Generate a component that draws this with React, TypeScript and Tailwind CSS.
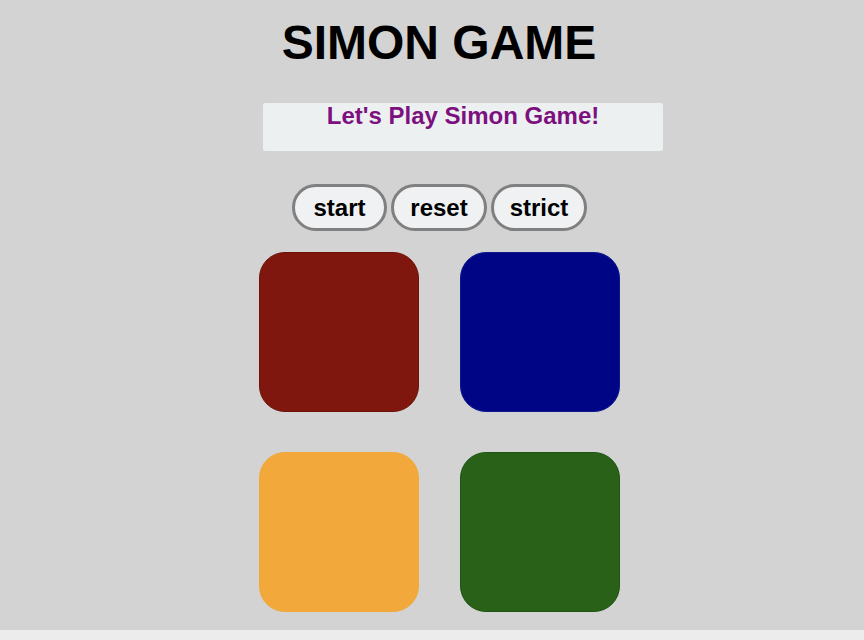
export default function App() {
  const font = { fontFamily: '"Liberation Sans", Arial, Helvetica, sans-serif' };
  return (
    <div className="min-h-screen bg-[#ececec]" style={font}>
      <div className="h-[630px] bg-[#d3d3d3] flex flex-col items-start pl-[259px]">
        <h1 className="w-[360px] mt-[19px] text-center text-[48px] leading-[48px] font-bold text-black">
          SIMON GAME
        </h1>
        <div className="ml-[4px] mt-[36px] w-[400px] h-[48px] bg-[#ecf0f1] rounded-[2px] text-center text-[24px] leading-[26px] font-bold text-[#7d107f]">
          Let's Play Simon Game!
        </div>
        <div className="ml-[33px] mt-[33px] flex gap-[4px]">
          <button className="w-[95px] h-[47px] rounded-full border-[3px] border-[#808080] bg-[#eff1f2] text-[24px] leading-[28px] font-bold text-black">
            start
          </button>
          <button className="w-[96px] h-[47px] rounded-full border-[3px] border-[#808080] bg-[#eff1f2] text-[24px] leading-[28px] font-bold text-black">
            reset
          </button>
          <button className="w-[96px] h-[47px] rounded-full border-[3px] border-[#808080] bg-[#eff1f2] text-[24px] leading-[28px] font-bold text-black">
            strict
          </button>
        </div>
        <div className="mt-[21px] grid grid-cols-[160px_160px] gap-x-[41px] gap-y-[40px]">
          <div className="w-[160px] h-[160px] rounded-[26px] bg-[#80170f] border border-[#6f120c]" />
          <div className="w-[160px] h-[160px] rounded-[26px] bg-[#000585] border border-[#0a1a8a]" />
          <div className="w-[160px] h-[160px] rounded-[26px] bg-[#f3a83b] border border-[#f0a838]" />
          <div className="w-[160px] h-[160px] rounded-[26px] bg-[#2a6119] border border-[#1f5414]" />
        </div>
      </div>
    </div>
  );
}
